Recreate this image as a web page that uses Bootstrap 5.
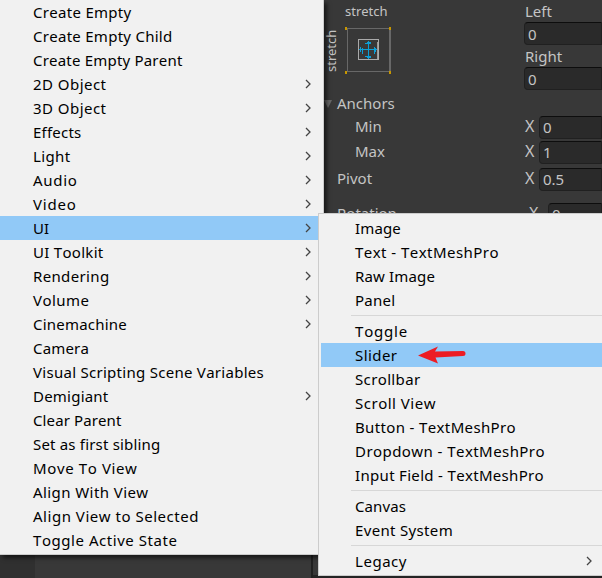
<!DOCTYPE html>
<html lang="en">
<head>
<meta charset="utf-8">
<title>Editor menu</title>
<link rel="stylesheet" href="https://cdn.jsdelivr.net/npm/bootstrap@5.3.0/dist/css/bootstrap.min.css">
<style>
body{width:602px;height:578px;background:#383838;font-family:"Noto Sans","Open Sans",sans-serif;font-size:15px;line-height:24px;color:#000;font-kerning:none}
.inspector{padding-left:324px;color:#c4c4c4;height:213px}
.fields-top{height:91px}
.label-col{width:200px}
.inspector .small-label{font-size:13px;line-height:22px;padding-left:21px;height:27px}
.side-label{writing-mode:vertical-rl;transform:rotate(180deg);width:14px;height:45px;font-size:13px;line-height:14px;margin-right:2px}
.field{height:23px;background:#2a2a2a;border:1px solid #202020;border-top-color:#0d0d0d;border-radius:4px 0 0 4px;padding-left:3px;line-height:22px;overflow:hidden}
.fields-top .field{line-height:23px}
.prop .field{line-height:20px}
.field-label{height:22px;line-height:23px;padding-left:1px}
.prop{height:25px;line-height:21px}
.prop .name{width:201px;padding-left:13px}
.prop .name.inner{padding-left:31px}
.prop .axis{width:14px;font-size:16px}
.prop.pivot{margin-top:2px}
.prop.rotation{margin-top:10px}
.prop.rotation .name{width:205px}
.prop.rotation .axis{width:19px}
.menu-pane{background:#f1f1f1;border:0 solid #ccc;box-shadow:3px 3px 4px rgba(0,0,0,.55)}
.menu-main{width:324px;height:555px;border-width:0 1px 1px 0}
.menu-sub{left:318px;top:213px;width:284px;height:363px;border-width:1px 0 1px 1px;padding:2px 0 0 2px;box-shadow:none}
.menu-row{height:24px;line-height:24px;white-space:nowrap}
.menu-main .menu-row{padding:0 12px 0 33px}
.menu-sub .menu-row{padding:0 10px 0 34px}
.picked{background:#91c9f7}
.menu-row svg{width:6px;height:10px;fill:none;stroke:#444;stroke-width:1.3}
.menu-line{height:7px;padding:3px 0 3px 30px}
.menu-line div{height:1px;background:#d7d7d7}
.pointer{left:418px;top:345px}
.below{top:554px;height:24px}
.below .left-strip{width:35px;background:#303030}
.below .mid-strip{width:278px;border-right:2px solid #202020}
.below .right-strip{height:3px;background:#242424}
</style>
<script src="https://cdn.jsdelivr.net/npm/bootstrap@5.3.0/dist/js/bootstrap.bundle.min.js"></script>
</head>
<body class="position-relative overflow-hidden m-0">
<main class="inspector overflow-hidden">
  <div class="fields-top d-flex">
    <div class="label-col d-flex flex-column">
      <div class="small-label">stretch</div>
      <div class="d-flex">
        <div class="side-label">stretch</div>
        <svg width="54" height="48" viewBox="340 27 54 48" shape-rendering="crispEdges">
          <path d="M347.5 28.5H390.5V71.5H347.5Z" fill="none" stroke="#686868"/>
          <path d="M389.5 30V71" stroke="#686868"/>
          <path d="M358.5 39.5H378.5V59.5H358.5Z" fill="none" stroke="#aaa"/>
          <path d="M377.5 42V59" stroke="#999"/>
          <path d="M359 49.5H377M368.5 41V59M360.5 47V52M362.5 48V54M374.5 47V54M375.5 48V52M365 43.5H371M367 42.5H371M365 56.5H371M367 57.5H371" fill="none" stroke="#0b9fd8"/>
          <path d="M345 27h2v3h-2zM389 27h2v3h-2zM345 71h2v3h-2zM389 71h2v3h-2z" fill="#c79700"/>
        </svg>
      </div>
    </div>
    <div class="flex-grow-1">
      <div class="field-label">Left</div><div class="field">0</div>
      <div class="field-label">Right</div><div class="field">0</div>
    </div>
  </div>
  <div class="d-flex align-items-center prop"><svg width="13" height="10"><path d="M0 1H8L4 9Z" fill="#686868"/></svg><span>Anchors</span></div>
  <div class="d-flex prop"><div class="name inner">Min</div><div class="axis">X</div><div class="field flex-grow-1">0</div></div>
  <div class="d-flex prop"><div class="name inner">Max</div><div class="axis">X</div><div class="field flex-grow-1">1</div></div>
  <div class="d-flex prop pivot"><div class="name">Pivot</div><div class="axis">X</div><div class="field flex-grow-1">0.5</div></div>
  <div class="d-flex prop rotation"><div class="name">Rotation</div><div class="axis">X</div><div class="field flex-grow-1">0</div></div>
</main>
<div class="below position-absolute start-0 w-100 d-flex"><div class="left-strip"></div><div class="mid-strip"></div><div class="right-strip flex-grow-1 align-self-end"></div></div>
<nav class="menu-pane menu-main position-absolute top-0 start-0" id="main"></nav>
<nav class="menu-pane menu-sub position-absolute" id="sub"></nav>
<svg class="pointer position-absolute" width="50" height="20" viewBox="418 345 50 20"><path d="M418 355.5L438 346.5 435 351.5 463 351A2.5 2.5 0 0 1 463 356L435.5 357.5 438 363.5Z" fill="#ed1c24"/></svg>
<script>
const chevron = '<svg viewBox="0 0 6 10"><path d="M1 1L5 5L1 9"/></svg>';
// Each item is [name, label width]; a trailing ">" marks a submenu and null a divider.
function fill(id, items, picked) {
  const menu = document.getElementById(id);
  menu.innerHTML = items.map(item => {
    if (!item) return '<div class="menu-line"><div></div></div>';
    const more = item[0].endsWith('>'), name = item[0].replace('>', '');
    return `<div class="menu-row d-flex align-items-center justify-content-between ${name === picked ? 'picked' : ''}"><span data-w="${item[1]}">${name}</span>${more ? chevron : ''}</div>`;
  }).join('');
  menu.querySelectorAll('[data-w]').forEach(label => {
    const spare = label.dataset.w - label.getBoundingClientRect().width;
    label.style.letterSpacing = (spare / label.textContent.length).toFixed(3) + 'px';
  });
}
fill('main', [['Create Empty',98.5],['Create Empty Child',139.5],['Create Empty Parent',149.5],['2D Object>',73.5],['3D Object>',73.5],['Effects>',48.5],['Light>',37.5],['Audio>',44.5],['Video>',43.5],['UI>',16],['UI Toolkit>',70.5],['Rendering>',76.5],['Volume>',56.5],['Cinemachine>',94],['Camera',56],['Visual Scripting Scene Variables',231],['Demigiant>',75.5],['Clear Parent',88.5],['Set as first sibling',127.5],['Move To View',104.5],['Align With View',115.5],['Align View to Selected',166],['Toggle Active State',144.5]], 'UI');
fill('sub', [['Image',46],['Text - TextMeshPro',144],['Raw Image',80],['Panel',40.5],null,['Toggle',53],['Slider',42.5],['Scrollbar',65.5],['Scroll View',81],['Button - TextMeshPro',161],['Dropdown - TextMeshPro',190],['Input Field - TextMeshPro',189],null,['Canvas',51],['Event System',98],null,['Legacy>',52]], 'Slider');
</script>
</body>
</html>
